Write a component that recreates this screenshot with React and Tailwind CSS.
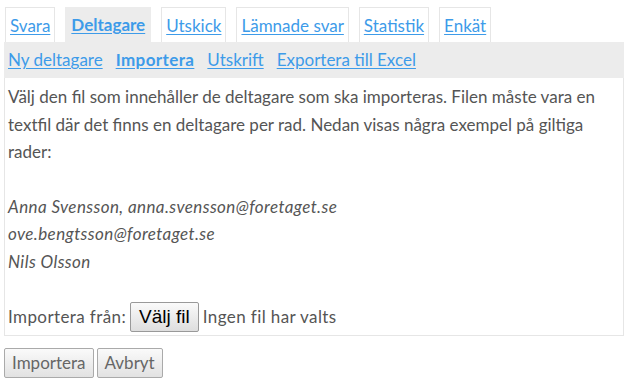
const tabs = ['Svara', 'Deltagare', 'Utskick', 'Lämnade svar', 'Statistik', 'Enkät']
const subLinks = ['Ny deltagare', 'Importera', 'Utskrift', 'Exportera till Excel']

export default function App() {
  return (
    <div className="bg-white w-[631px] h-[386px] text-[#555] text-[17px]" style={{ fontFamily: 'Lato, "Open Sans", sans-serif' }}>
      <div className="pt-[7px] pl-[5px] flex gap-[10px]">
        {tabs.map(t => (
          <a
            key={t}
            href="#"
            className={`h-[35px] pt-[5px] text-[#3d9be9] underline underline-offset-2 ${
              t === 'Deltagare' ? 'bg-[#ececec] font-bold px-[6px]' : 'px-[4px] border border-b-0 border-[#e6e6e6] bg-white'
            }`}
          >
            {t}
          </a>
        ))}
      </div>
      <div className="mx-[4px] w-[620px] h-[36px] bg-[#ececec] flex items-center gap-[13px] pl-[4px]">
        {subLinks.map(l => (
          <a key={l} href="#" className={`text-[#3d9be9] underline underline-offset-2 ${l === 'Importera' ? 'font-bold tracking-[0.4px]' : ''}`}>
            {l}
          </a>
        ))}
      </div>
      <div className="mx-[4px] w-[620px] h-[258px] border border-t-0 border-[#e6e6e6] px-[3px] pt-[5px] leading-[27.5px]">
        <p>
          Välj den fil som innehåller de deltagare som ska importeras. Filen måste vara en textfil där det finns en
          deltagare per rad. Nedan visas några exempel på giltiga rader:
        </p>
        <p className="mt-[27px] italic tracking-[0.4px]">
          Anna Svensson, anna.svensson@foretaget.se
          <br />
          ove.bengtsson@foretaget.se
          <br />
          Nils Olsson
        </p>
        <div className="mt-[27px] flex items-center gap-[4px]">
          <span className="tracking-[0.4px]">Importera från:</span>
          <button
            className="h-[30px] px-[8px] border border-[#999] rounded-[2px] bg-gradient-to-b from-[#fafafa] to-[#dedede] text-black text-[19px]"
            style={{ fontFamily: '"Liberation Sans", Arial, sans-serif' }}
          >
            Välj fil
          </button>
          <span className="tracking-[0.4px]">Ingen fil har valts</span>
        </div>
      </div>
      <div className="mt-[12px] ml-[4px] flex gap-[3px]">
        <button className="h-[30px] px-[7px] border border-[#aaa] rounded-[2px] bg-gradient-to-b from-[#fafafa] to-[#e2e2e2] text-[#666]">
          Importera
        </button>
        <button className="h-[30px] px-[7px] border border-[#aaa] rounded-[2px] bg-gradient-to-b from-[#fafafa] to-[#e2e2e2] text-[#666]">
          Avbryt
        </button>
      </div>
    </div>
  )
}
